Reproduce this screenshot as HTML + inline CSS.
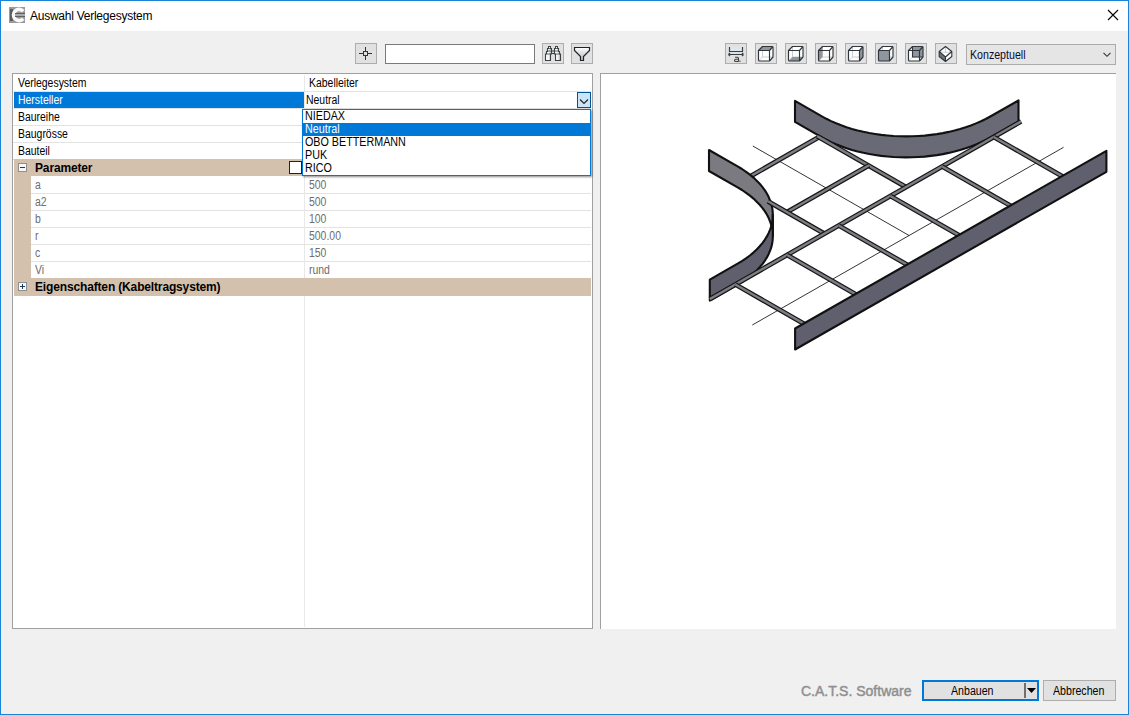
<!DOCTYPE html>
<html><head><meta charset="utf-8">
<style>
*{box-sizing:border-box;margin:0;padding:0}
html,body{width:1129px;height:715px;overflow:hidden}
body{position:relative;background:#f0f0f0;font-family:"Liberation Sans",sans-serif;font-size:11px;color:#000}
.a{position:absolute}
#frame{left:0;top:0;width:1129px;height:715px;border:1px solid #1883d7;pointer-events:none;z-index:50}
#title{left:1px;top:1px;width:1127px;height:30px;background:#fff}
#ttext{left:30px;top:8px;font-size:12px;letter-spacing:-0.25px;line-height:16px;color:#000}
.btn{background:#e1e1e1;border:1px solid #adadad}
.row{position:absolute;height:16px;line-height:16px;white-space:nowrap;font-size:12px;transform:scaleX(0.87);transform-origin:0 0}
.hl{position:absolute;background:#fff}
.sep{position:absolute;height:1px;background:#e3e3e3}
</style></head><body>
<div id="frame" class="a"></div>
<div id="title" class="a"></div>
<svg class="a" style="left:9px;top:7px" width="16" height="16" viewBox="0 0 16 16">
<rect x="0" y="0" width="16" height="16" fill="#9a9a9a"/>
<rect x="1" y="2" width="3" height="12" fill="#5c5c5c"/>
<path d="M14.2 4.2 A5.6 5.6 0 1 0 14.2 11.8" fill="none" stroke="#fafafa" stroke-width="3.6"/>
<rect x="6" y="6.4" width="10" height="3.2" fill="#b4b4b4"/>
<path d="M6 6.6 H16 M6 9.4 H16" stroke="#5a5a5a" stroke-width="1"/>
</svg>
<div id="ttext" class="a">Auswahl Verlegesystem</div>
<svg class="a" style="left:1107px;top:9px" width="12" height="12" viewBox="0 0 12 12">
<path d="M1 1 L11 11 M11 1 L1 11" stroke="#000" stroke-width="1.1"/>
</svg>

<!-- left toolbar -->
<div class="a btn" style="left:355px;top:43px;width:22px;height:21px"></div>
<svg class="a" style="left:355px;top:43px" width="22" height="21" viewBox="0 0 22 21">
<path d="M10.5 4 V8.5 M10.5 12.5 V17 M4 10.5 H8.5 M12.5 10.5 H17" stroke="#333" stroke-width="1"/>
<rect x="8.5" y="8.5" width="4" height="4" fill="none" stroke="#333" stroke-width="1"/>
</svg>
<div class="a" style="left:385px;top:44px;width:150px;height:20px;background:#fff;border:1px solid #7a7a7a"></div>
<div class="a btn" style="left:542px;top:43px;width:22px;height:21px"></div>
<div class="a btn" style="left:571px;top:43px;width:22px;height:21px"></div>

<!-- right toolbar -->
<div class="a btn" style="left:725px;top:43px;width:22px;height:21px"></div>
<div class="a btn" style="left:755px;top:43px;width:22px;height:21px"></div>
<div class="a btn" style="left:785px;top:43px;width:22px;height:21px"></div>
<div class="a btn" style="left:815px;top:43px;width:22px;height:21px"></div>
<div class="a btn" style="left:845px;top:43px;width:22px;height:21px"></div>
<div class="a btn" style="left:875px;top:43px;width:22px;height:21px"></div>
<div class="a btn" style="left:905px;top:43px;width:22px;height:21px"></div>
<div class="a btn" style="left:935px;top:43px;width:22px;height:21px"></div>
<div class="a" style="left:966px;top:44px;width:150px;height:21px;background:#e5e5e5;border:1px solid #acacac"></div>
<div class="a row" style="left:970px;top:47px;color:#0a0a30;transform:scaleX(0.885)">Konzeptuell</div>

<svg class="a" style="left:542px;top:43px" width="22" height="21" viewBox="0 0 22 21"><defs><linearGradient id="gb" x1="0" x2="1"><stop offset="0" stop-color="#fff"/><stop offset="0.5" stop-color="#f4f6f6"/><stop offset="1" stop-color="#b5bfc0"/></linearGradient></defs><path d="M6.5 3.5 L8.5 3.5 L8.5 5.5 L9.5 5.5 L9.5 11 L8.5 11 L8.5 17.5 L3.5 17.5 L3.5 11 L4.5 11 L4.5 8.5 L5.5 8.5 L5.5 5.5 L6.5 5.5 Z" fill="url(#gb)" stroke="#3c4144" stroke-width="1.1" stroke-linejoin="miter"/><path d="M5.5 5.5 H9.5 M5.5 8 H9.5 M4.5 11 H8.5" stroke="#3c4144" stroke-width="0.8" fill="none"/><path d="M15.5 3.5 L13.5 3.5 L13.5 5.5 L12.5 5.5 L12.5 11 L13.5 11 L13.5 17.5 L18.5 17.5 L18.5 11 L17.5 11 L17.5 8.5 L16.5 8.5 L16.5 5.5 L15.5 5.5 Z" fill="url(#gb)" stroke="#3c4144" stroke-width="1.1" stroke-linejoin="miter"/><path d="M16.5 5.5 H12.5 M16.5 8 H12.5 M17.5 11 H13.5" stroke="#3c4144" stroke-width="0.8" fill="none"/><path d="M9.5 8 H12.5 M9.5 10.5 H12.5" stroke="#3c4144" stroke-width="1"/><circle cx="7.5" cy="4.6" r="0.6" fill="#fff"/><circle cx="14.5" cy="4.6" r="0.6" fill="#fff"/></svg>
<svg class="a" style="left:571px;top:43px" width="22" height="21" viewBox="0 0 22 21"><defs><linearGradient id="gf" x1="0" y1="0" x2="0" y2="1"><stop offset="0" stop-color="#fff"/><stop offset="1" stop-color="#aeb6bf"/></linearGradient></defs>
<path d="M3.5 4.5 H18.5 V7.5 L12.5 13.5 V17.5 H9.5 V13.5 L3.5 7.5 Z" fill="url(#gf)" stroke="#222" stroke-width="1.2" stroke-linejoin="miter"/></svg>
<svg class="a" style="left:1102px;top:51px" width="10" height="8" viewBox="0 0 10 8"><path d="M1.5 1.8 L5 5.3 L8.5 1.8" fill="none" stroke="#333" stroke-width="1.1"/></svg>
<svg class="a" style="left:725px;top:43px" width="22" height="21" viewBox="0 0 22 21"><rect x="5" y="4" width="12" height="4" fill="#dfe6ee"/><path d="M4.5 4 V8.5 H17.5 V4" fill="none" stroke="#3a3f44" stroke-width="1.2"/><path d="M3.5 11.5 H18.5 M3.5 11.5 L5 10 M3.5 11.5 L5 13 M18.5 11.5 L17 10 M18.5 11.5 L17 13" fill="none" stroke="#3a3f44" stroke-width="1.2"/><path d="M10 14.3 H12.5 Q13.5 14.3 13.5 15.5 V18.5 M13.5 16.3 H11 Q9.5 16.3 9.5 17.4 Q9.5 18.5 11 18.5 H13.5" fill="none" stroke="#3a3f44" stroke-width="1.1"/><rect x="14.3" y="17.6" width="1.2" height="1.2" fill="#3a3f44"/></svg>
<svg class="a" style="left:755px;top:43px" width="22" height="21" viewBox="0 0 22 21"><path d="M3.5 7.5 L7.5 3.5 H18 V14 L14.5 18 H3.5 Z" fill="#fff"/><path d="M7.5 3.5 V14 H18 M7.5 14 L3.5 18" fill="none" stroke="#c4c8cc" stroke-width="0.9"/><polygon points="3.5,7.5 7.5,3.5 18,3.5 14.5,7.5" fill="#8f969e"/><path d="M3.5 7.5 L7.5 3.5 H17 Q18 3.5 18 4.5 V14 L14.5 18 H4.5 Q3.5 18 3.5 17 Z" fill="none" stroke="#30363c" stroke-width="1.15" stroke-linejoin="round"/><path d="M3.5 7.5 H14.5 V18 M14.5 7.5 L18 3.5" fill="none" stroke="#30363c" stroke-width="1.15"/></svg>
<svg class="a" style="left:785px;top:43px" width="22" height="21" viewBox="0 0 22 21"><path d="M3.5 7.5 L7.5 3.5 H18 V14 L14.5 18 H3.5 Z" fill="#fff"/><path d="M7.5 3.5 V14 H18 M7.5 14 L3.5 18" fill="none" stroke="#c4c8cc" stroke-width="0.9"/><polygon points="3.5,18 7.5,14 18,14 14.5,18" fill="#8f969e"/><path d="M3.5 7.5 L7.5 3.5 H17 Q18 3.5 18 4.5 V14 L14.5 18 H4.5 Q3.5 18 3.5 17 Z" fill="none" stroke="#30363c" stroke-width="1.15" stroke-linejoin="round"/><path d="M3.5 7.5 H14.5 V18 M14.5 7.5 L18 3.5" fill="none" stroke="#30363c" stroke-width="1.15"/></svg>
<svg class="a" style="left:815px;top:43px" width="22" height="21" viewBox="0 0 22 21"><path d="M3.5 7.5 L7.5 3.5 H18 V14 L14.5 18 H3.5 Z" fill="#fff"/><path d="M7.5 3.5 V14 H18 M7.5 14 L3.5 18" fill="none" stroke="#c4c8cc" stroke-width="0.9"/><polygon points="3.5,7.5 7.5,3.5 7.5,14 3.5,18" fill="#8f969e"/><path d="M3.5 7.5 L7.5 3.5 H17 Q18 3.5 18 4.5 V14 L14.5 18 H4.5 Q3.5 18 3.5 17 Z" fill="none" stroke="#30363c" stroke-width="1.15" stroke-linejoin="round"/><path d="M3.5 7.5 H14.5 V18 M14.5 7.5 L18 3.5" fill="none" stroke="#30363c" stroke-width="1.15"/></svg>
<svg class="a" style="left:845px;top:43px" width="22" height="21" viewBox="0 0 22 21"><path d="M3.5 7.5 L7.5 3.5 H18 V14 L14.5 18 H3.5 Z" fill="#fff"/><path d="M7.5 3.5 V14 H18 M7.5 14 L3.5 18" fill="none" stroke="#c4c8cc" stroke-width="0.9"/><polygon points="14.5,7.5 18,3.5 18,14 14.5,18" fill="#8f969e"/><path d="M3.5 7.5 L7.5 3.5 H17 Q18 3.5 18 4.5 V14 L14.5 18 H4.5 Q3.5 18 3.5 17 Z" fill="none" stroke="#30363c" stroke-width="1.15" stroke-linejoin="round"/><path d="M3.5 7.5 H14.5 V18 M14.5 7.5 L18 3.5" fill="none" stroke="#30363c" stroke-width="1.15"/></svg>
<svg class="a" style="left:875px;top:43px" width="22" height="21" viewBox="0 0 22 21"><path d="M3.5 7.5 L7.5 3.5 H18 V14 L14.5 18 H3.5 Z" fill="#fff"/><path d="M7.5 3.5 V14 H18 M7.5 14 L3.5 18" fill="none" stroke="#c4c8cc" stroke-width="0.9"/><polygon points="3.5,7.5 14.5,7.5 14.5,18 3.5,18" fill="#8f969e"/><path d="M3.5 7.5 L7.5 3.5 H17 Q18 3.5 18 4.5 V14 L14.5 18 H4.5 Q3.5 18 3.5 17 Z" fill="none" stroke="#30363c" stroke-width="1.15" stroke-linejoin="round"/><path d="M3.5 7.5 H14.5 V18 M14.5 7.5 L18 3.5" fill="none" stroke="#30363c" stroke-width="1.15"/></svg>
<svg class="a" style="left:905px;top:43px" width="22" height="21" viewBox="0 0 22 21"><path d="M3.5 7.5 L7.5 3.5 H18 V14 L14.5 18 H3.5 Z" fill="#fff"/><path d="M7.5 3.5 V14 H18 M7.5 14 L3.5 18" fill="none" stroke="#c4c8cc" stroke-width="0.9"/><polygon points="7.5,3.5 18,3.5 18,14 7.5,14" fill="#8f969e"/><path d="M7.5 3.5 V14 H18" fill="none" stroke="#30363c" stroke-width="1.1"/><path d="M3.5 7.5 L7.5 3.5 H17 Q18 3.5 18 4.5 V14 L14.5 18 H4.5 Q3.5 18 3.5 17 Z" fill="none" stroke="#30363c" stroke-width="1.15" stroke-linejoin="round"/><path d="M3.5 7.5 H14.5 V18 M14.5 7.5 L18 3.5" fill="none" stroke="#30363c" stroke-width="1.15"/></svg>
<svg class="a" style="left:935px;top:43px" width="22" height="21" viewBox="0 0 22 21"><polygon points="10.5,3.5 16.8,8.5 16.8,13.5 10.5,18.5 4.2,13.5 4.2,8.5" fill="#fff"/><polygon points="4.2,8.5 10.5,14 10.5,18.5 4.2,13.5" fill="#6e757d"/><path d="M10.5 3.5 V9.5 M4.2 8.5 L10.5 9.5 L16.8 8.5" fill="none" stroke="#c4c8cc" stroke-width="0.8"/><path d="M10.5 3.5 L16.8 8.5 V13.5 L10.5 18.5 L4.2 13.5 V8.5 Z M4.2 8.5 L10.5 14 V18.5 M10.5 14 L16.8 8.5" fill="none" stroke="#30363c" stroke-width="1.1" stroke-linejoin="round"/></svg>
<!-- property grid -->
<div class="a" id="grid" style="left:12px;top:73px;width:581px;height:556px;background:#fff;border:1px solid #a0a0a0"></div>

<div class="a" style="left:304px;top:75px;width:1px;height:552px;background:#e8e8e8"></div>
<div class="sep" style="left:13px;top:91px;width:578px"></div>
<div class="sep" style="left:13px;top:108px;width:578px"></div>
<div class="sep" style="left:13px;top:125px;width:578px"></div>
<div class="sep" style="left:13px;top:142px;width:578px"></div>
<div class="sep" style="left:13px;top:159px;width:578px"></div>
<div class="row" style="left:18px;top:75px">Verlegesystem</div>
<div class="row" style="left:309px;top:75px">Kabelleiter</div>
<div class="a" style="left:14px;top:92px;width:290px;height:16px;background:#0078d7"></div>
<div class="row" style="left:18px;top:92px;color:#fff">Hersteller</div>
<div class="row" style="left:306px;top:92px">Neutral</div>
<div class="row" style="left:18px;top:109px">Baureihe</div>
<div class="row" style="left:18px;top:126px">Baugrösse</div>
<div class="row" style="left:18px;top:143px">Bauteil</div>
<div class="a" style="left:14px;top:159px;width:577px;height:17px;background:#d3c1ad"></div>
<div class="a" style="left:14px;top:176px;width:17px;height:102px;background:#d3c1ad"></div>
<div class="row" style="left:35px;top:160px;font-weight:bold;font-size:12px;letter-spacing:-0.15px;transform:none">Parameter</div>
<div class="sep" style="left:31px;top:193px;width:560px"></div>
<div class="row" style="left:35px;top:177px;color:#6d6d6d">a</div>
<div class="row" style="left:309px;top:177px;color:#6d6d6d">500</div>
<div class="sep" style="left:31px;top:210px;width:560px"></div>
<div class="row" style="left:35px;top:194px;color:#6d6d6d">a2</div>
<div class="row" style="left:309px;top:194px;color:#6d6d6d">500</div>
<div class="sep" style="left:31px;top:227px;width:560px"></div>
<div class="row" style="left:35px;top:211px;color:#6d6d6d">b</div>
<div class="row" style="left:309px;top:211px;color:#6d6d6d">100</div>
<div class="sep" style="left:31px;top:244px;width:560px"></div>
<div class="row" style="left:35px;top:228px;color:#6d6d6d">r</div>
<div class="row" style="left:309px;top:228px;color:#6d6d6d">500.00</div>
<div class="sep" style="left:31px;top:261px;width:560px"></div>
<div class="row" style="left:35px;top:245px;color:#6d6d6d">c</div>
<div class="row" style="left:309px;top:245px;color:#6d6d6d">150</div>
<div class="sep" style="left:31px;top:278px;width:560px"></div>
<div class="row" style="left:35px;top:262px;color:#6d6d6d">Vi</div>
<div class="row" style="left:309px;top:262px;color:#6d6d6d">rund</div>
<div class="a" style="left:14px;top:278px;width:577px;height:18px;background:#d3c1ad"></div>
<div class="row" style="left:35px;top:279px;font-weight:bold;font-size:12px;letter-spacing:-0.15px;transform:none">Eigenschaften (Kabeltragsystem)</div>
<svg class="a" style="left:18px;top:163px" width="9" height="9" viewBox="0 0 9 9"><rect x="0.5" y="0.5" width="8" height="8" fill="#f8f8f8" stroke="#8f8f8f"/><path d="M2 4.5 H7" stroke="#1e395b" stroke-width="1"/></svg>
<svg class="a" style="left:18px;top:282px" width="9" height="9" viewBox="0 0 9 9"><rect x="0.5" y="0.5" width="8" height="8" fill="#f8f8f8" stroke="#8f8f8f"/><path d="M2 4.5 H7 M4.5 2 V7" stroke="#1e395b" stroke-width="1"/></svg>
<div class="a" style="left:289px;top:161px;width:13px;height:13px;background:#fff;border:1px solid #222"></div>
<div class="a" style="left:577px;top:92px;width:14px;height:16px;background:#cce4f7;border:1px solid #005499"></div>
<svg class="a" style="left:577px;top:92px" width="14" height="16" viewBox="0 0 14 16"><path d="M3 7.5 L7 11.5 L11 7.5" fill="none" stroke="#222" stroke-width="1.1"/></svg>
<div class="a" style="left:302px;top:109px;width:289px;height:67px;background:#fff;border:1px solid #0078d7;box-shadow:1px 1px 2px rgba(0,0,0,0.45)"></div>
<div class="row" style="left:305px;top:110px;height:13px;line-height:13px;transform:scaleX(0.895)">NIEDAX</div>
<div class="a" style="left:303px;top:123px;width:287px;height:13px;background:#0078d7"></div>
<div class="row" style="left:305px;top:123px;height:13px;line-height:13px;color:#fff;transform:scaleX(0.895)">Neutral</div>
<div class="row" style="left:305px;top:136px;height:13px;line-height:13px;transform:scaleX(0.895)">OBO BETTERMANN</div>
<div class="row" style="left:305px;top:149px;height:13px;line-height:13px;transform:scaleX(0.895)">PUK</div>
<div class="row" style="left:305px;top:162px;height:13px;line-height:13px;transform:scaleX(0.895)">RICO</div>
<!-- 3D panel -->
<div class="a" id="view" style="left:600px;top:73px;width:516px;height:556px;background:#fff;border-left:1px solid #a0a0a0;border-top:1px solid #a0a0a0"></div>

<!-- 3D --><svg class="a" style="left:0;top:0;z-index:5" width="1129" height="715" viewBox="0 0 1129 715"><path d="M752.3 325.0 L1063.6 147.3" stroke="#000" stroke-width="0.8" fill="none"/><path d="M752.8 146.0 L909.1 235.5" stroke="#000" stroke-width="0.8" fill="none"/><polygon points="795.0,121.9 821.9,137.3 821.9,137.3 826.4,139.8 831.1,142.1 836.1,144.3 841.2,146.3 846.5,148.2 852.0,149.9 857.6,151.4 863.4,152.8 869.3,154.0 875.2,155.0 881.3,155.9 887.4,156.5 893.6,157.0 899.8,157.3 906.1,157.4 912.3,157.3 918.5,157.0 924.7,156.6 930.8,155.9 936.9,155.1 942.9,154.1 948.7,152.9 954.5,151.5 960.1,150.0 965.6,148.3 970.9,146.5 976.1,144.4 981.0,142.3 985.7,140.0 990.3,137.5 1018.5,121.4 1018.5,100.4 990.3,116.5 985.7,119.0 981.0,121.3 976.1,123.4 970.9,125.5 965.6,127.3 960.1,129.0 954.5,130.5 948.7,131.9 942.9,133.1 936.9,134.1 930.8,134.9 924.7,135.6 918.5,136.0 912.3,136.3 906.1,136.4 899.8,136.3 893.6,136.0 887.4,135.5 881.3,134.9 875.2,134.0 869.3,133.0 863.4,131.8 857.6,130.4 852.0,128.9 846.5,127.2 841.2,125.3 836.1,123.3 831.1,121.1 826.4,118.8 821.9,116.3 821.9,116.3 795.0,100.9" fill="#6a6a76" stroke="#111" stroke-width="2.1" stroke-linejoin="round"/><path d="M748.6 177.3 L818.9 137.1" stroke="#151515" stroke-width="4.8" fill="none"/><path d="M748.6 177.3 L818.9 137.1" stroke="#7d7d84" stroke-width="2.4" fill="none"/><path d="M817.1 136.1 L906.5 187.3" stroke="#151515" stroke-width="4.8" fill="none"/><path d="M817.1 136.1 L906.5 187.3" stroke="#7d7d84" stroke-width="2.4" fill="none"/><polygon points="709.0,171.0 737.6,187.4 737.6,187.4 742.0,190.0 746.1,192.8 749.9,195.6 753.5,198.6 756.7,201.7 759.7,204.8 762.5,208.1 764.9,211.4 767.0,214.8 768.8,218.3 770.2,221.8 771.4,225.3 772.2,228.9 772.7,232.5 772.8,236.1 772.8,215.1 772.7,211.5 772.2,207.9 771.4,204.3 770.2,200.8 768.8,197.3 767.0,193.8 764.9,190.4 762.5,187.1 759.7,183.8 756.7,180.7 753.5,177.6 749.9,174.6 746.1,171.8 742.0,169.0 737.6,166.4 737.6,166.4 709.0,150.0" fill="#7a7a80" stroke="#111" stroke-width="2.1" stroke-linejoin="round"/><polygon points="772.8,236.1 772.7,239.7 772.2,243.3 771.4,246.9 770.2,250.4 768.7,253.9 766.9,257.4 764.8,260.8 762.4,264.1 759.7,267.3 756.7,270.5 753.4,273.6 749.9,276.5 746.0,279.4 741.9,282.1 737.6,284.7 709.8,300.6 709.8,279.6 737.6,263.7 741.9,261.1 746.0,258.4 749.9,255.5 753.4,252.6 756.7,249.5 759.7,246.3 762.4,243.1 764.8,239.8 766.9,236.4 768.7,232.9 770.2,229.4 771.4,225.9 772.2,222.3 772.7,218.7 772.8,215.1" fill="#5f5f6e" stroke="#111" stroke-width="2.1" stroke-linejoin="round"/><path d="M786.9 212.2 L869.0 165.3" stroke="#151515" stroke-width="4.8" fill="none"/><path d="M786.9 212.2 L869.0 165.3" stroke="#7d7d84" stroke-width="2.4" fill="none"/><path d="M768.0 201.3 L824.4 233.7" stroke="#151515" stroke-width="4.8" fill="none"/><path d="M768.0 201.3 L824.4 233.7" stroke="#7d7d84" stroke-width="2.4" fill="none"/><path d="M709.8 299.1 L1021.1 121.4" stroke="#151515" stroke-width="4.8" fill="none"/><path d="M709.8 299.1 L1021.1 121.4" stroke="#7d7d84" stroke-width="2.4" fill="none"/><path d="M735.4 284.5 L819.0 332.4" stroke="#151515" stroke-width="4.8" fill="none"/><path d="M735.4 284.5 L819.0 332.4" stroke="#7d7d84" stroke-width="2.4" fill="none"/><path d="M787.1 255.0 L870.6 302.9" stroke="#151515" stroke-width="4.8" fill="none"/><path d="M787.1 255.0 L870.6 302.9" stroke="#7d7d84" stroke-width="2.4" fill="none"/><path d="M838.7 225.5 L922.3 273.4" stroke="#151515" stroke-width="4.8" fill="none"/><path d="M838.7 225.5 L922.3 273.4" stroke="#7d7d84" stroke-width="2.4" fill="none"/><path d="M890.4 196.0 L974.0 243.9" stroke="#151515" stroke-width="4.8" fill="none"/><path d="M890.4 196.0 L974.0 243.9" stroke="#7d7d84" stroke-width="2.4" fill="none"/><path d="M942.1 166.5 L1025.6 214.4" stroke="#151515" stroke-width="4.8" fill="none"/><path d="M942.1 166.5 L1025.6 214.4" stroke="#7d7d84" stroke-width="2.4" fill="none"/><path d="M993.7 137.0 L1077.3 184.9" stroke="#151515" stroke-width="4.8" fill="none"/><path d="M993.7 137.0 L1077.3 184.9" stroke="#7d7d84" stroke-width="2.4" fill="none"/><polygon points="795.1,349.5 1106.4,171.8 1106.4,150.8 795.1,328.5" fill="#5f5f6e" stroke="#111" stroke-width="2.1" stroke-linejoin="round"/></svg><!-- /3D -->
<!-- bottom -->
<div class="a" id="cats" style="left:801px;top:683px;font-size:14px;letter-spacing:0px;color:#8f8f8f;-webkit-text-stroke:0.45px #8f8f8f;line-height:16px">C.A.T.S. Software</div>
<div class="a" style="left:922px;top:680px;width:117px;height:21px;background:#e1e1e1;border:2px solid #0078d7"></div>
<div class="a" style="left:1043px;top:680px;width:73px;height:21px;background:#e1e1e1;border:1px solid #adadad"></div>
<div class="a row" style="left:951px;top:683px;transform:scaleX(0.885)">Anbauen</div>
<div class="a" style="left:1024px;top:683px;width:2px;height:15px;background:#707070"></div>
<svg class="a" style="left:1027px;top:688px" width="9" height="6" viewBox="0 0 9 6"><path d="M0 0 H9 L4.5 5 Z" fill="#000"/></svg>
<div class="a row" style="left:1053px;top:683px;transform:scaleX(0.885)">Abbrechen</div>
</body></html>
